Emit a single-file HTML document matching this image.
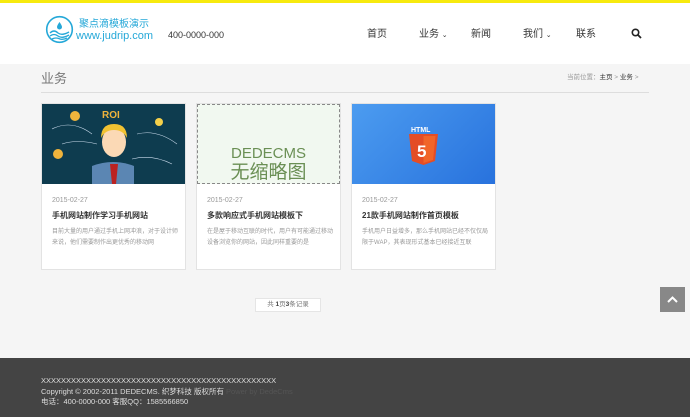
<!DOCTYPE html>
<html><head><meta charset="utf-8"><style>
*{margin:0;padding:0;box-sizing:border-box}
body{width:690px;height:417px;overflow:hidden;background:#f5f5f5;font-family:"Liberation Sans","Noto Sans CJK SC",sans-serif;position:relative}
.a{position:absolute;white-space:nowrap;line-height:1.2}
.top{position:absolute;left:0;top:0;width:690px;height:3px;background:#f7ea0f}
.hd{position:absolute;left:0;top:3px;width:690px;height:61px;background:#fff}
.nav{font-size:10px;color:#333;top:29px;line-height:12px}
.card{position:absolute;top:103px;width:145px;height:167px;background:#fff;border:1px solid #e3e3e3}
.card .img{height:80px}
.date{position:absolute;left:10px;top:92px;font-size:7px;color:#999;line-height:9px}
.tt{position:absolute;left:10px;top:107px;font-size:8px;font-weight:bold;color:#333;line-height:10px;white-space:nowrap}
.ds{position:absolute;left:10px;top:123px;font-size:6px;color:#999;line-height:11px;width:126px;white-space:normal;overflow:hidden;height:22px}
.ft{position:absolute;left:0;top:358px;width:690px;height:59px;background:#444}
.fl{position:absolute;left:41px;font-size:7.5px;color:#ddd;line-height:9px;white-space:nowrap}
</style></head><body>
<div class="top"></div>
<div class="hd"></div>
<svg class="a" style="left:45px;top:15px" width="29" height="29" viewBox="0 0 29 29"><circle cx="14.5" cy="14.5" r="12.8" fill="none" stroke="#25a8d8" stroke-width="1.6"/><path d="M14.5 7 q-2.5 3.5 -2.5 5 a2.5 2.5 0 0 0 5 0 q0-1.5 -2.5-5z" fill="#25a8d8"/><path d="M5 18 q4-4 8 0 q4 3 11-1 M5 21 q4-3 8 0 q4 3 11 -1 M7 24 q4-2 8 0 q3 1 7 -1" stroke="#25a8d8" fill="none" stroke-width="1.3"/></svg>
<div class="a" style="left:79px;top:19px;font-size:10px;line-height:11px;color:#25a8d8">聚点滴模板演示</div>
<div class="a" style="left:76px;top:30px;font-size:11px;line-height:12px;color:#25a8d8">www.judrip.com</div>
<div class="a" style="left:168px;top:30px;font-size:9px;line-height:11px;color:#333">400-0000-000</div>
<div class="a nav" style="left:367px">首页</div>
<div class="a nav" style="left:419px">业务 <span style="font-size:7px">⌄</span></div>
<div class="a nav" style="left:471px">新闻</div>
<div class="a nav" style="left:523px">我们 <span style="font-size:7px">⌄</span></div>
<div class="a nav" style="left:576px">联系</div>
<svg class="a" style="left:631px;top:28px" width="11" height="11" viewBox="0 0 11 11"><circle cx="4.5" cy="4.5" r="3.2" fill="none" stroke="#222" stroke-width="1.6"/><path d="M7 7l3 3" stroke="#222" stroke-width="1.8"/></svg>
<div class="a" style="left:41px;top:71px;font-size:13px;line-height:16px;color:#777">业务</div>
<div class="a" style="left:41px;top:92px;width:608px;height:1px;background:#ddd"></div>
<div class="a" style="left:567px;top:74px;font-size:6.5px;line-height:8px;color:#999">当前位置：<span style="color:#333">主页</span> &gt; <span style="color:#333">业务</span> &gt;</div>

<div class="card" style="left:41px"><div class="img" style="background:#0e3c4f;position:relative">
<svg width="143" height="80" viewBox="0 0 143 80"><text x="60" y="14" font-size="10" font-weight="bold" fill="#f0b43c" font-family="Liberation Sans">ROI</text><circle cx="33" cy="12" r="5" fill="#f0b43c"/><circle cx="16" cy="50" r="5" fill="#f0b43c"/><circle cx="117" cy="18" r="4" fill="#f5d04a"/><path d="M50 80 v-18 q21-8 42 0 v18z" fill="#5b86b3"/><path d="M68 60 h8 l-2 20 h-4z" fill="#b22"/><ellipse cx="72" cy="38" rx="12" ry="15" fill="#fbd9b5"/><path d="M59 34 q0-14 13-14 q13 0 13 14 q-4-8-13-8 q-9 0-13 8z" fill="#f1c232"/><path d="M10 25 q20-10 40 5 M95 30 q20-5 40 10 M20 40 q15 -5 35 0 M90 55 q20-5 40 5" stroke="#cde" stroke-width=".6" fill="none"/></svg></div>
<div class="date">2015-02-27</div><div class="tt">手机网站制作学习手机网站</div><div class="ds">目前大量的用户通过手机上网冲浪，对于设计师来说，他们需要制作出更优秀的移动网</div></div>

<div class="card" style="left:196px"><div class="img" style="background:#f1f8f0;border:1px dashed #888;text-align:center;color:#6a8f54;padding-top:40px;font-size:15px;line-height:17px">DEDECMS<br><span style="font-size:19px;line-height:22px">无缩略图</span></div>
<div class="date">2015-02-27</div><div class="tt">多款响应式手机网站模板下</div><div class="ds">在是屋于移动互联的时代，用户有可能通过移动设备浏览你的网站，因此同样重要的是</div></div>

<div class="card" style="left:351px"><div class="img" style="background:linear-gradient(135deg,#4c9cf0,#2872dd);position:relative">
<svg width="143" height="80" viewBox="0 0 143 80"><text x="59" y="28" font-size="7" font-weight="bold" fill="#fff" font-family="Liberation Sans">HTML</text><path d="M57 30 h29 l-3 27 l-11.5 4 l-11.5-4z" fill="#e44d26"/><path d="M71.5 32 h12 l-2.5 24 l-9.5 3z" fill="#f16529"/><text x="65" y="53" font-size="17" font-weight="bold" fill="#fff" font-family="Liberation Sans">5</text></svg></div>
<div class="date">2015-02-27</div><div class="tt">21款手机网站制作首页模板</div><div class="ds">手机用户日益增多，那么手机网站已经不仅仅局限于WAP，其表现形式基本已经接近互联</div></div>

<div class="a" style="left:255px;top:298px;width:66px;height:14px;background:#fff;border:1px solid #e5e5e5;font-size:6.5px;color:#777;text-align:center;line-height:12px">共 <b style="color:#444">1</b>页<b style="color:#444">3</b>条记录</div>
<div class="a" style="left:660px;top:287px;width:25px;height:25px;background:#888"><svg width="25" height="25"><path d="M8 15 l4.5-4.5 l4.5 4.5" stroke="#fff" stroke-width="2" fill="none"/></svg></div>

<div class="ft"></div>
<div class="fl" style="top:376px">XXXXXXXXXXXXXXXXXXXXXXXXXXXXXXXXXXXXXXXXXXXXXXX</div>
<div class="fl" style="top:387px">Copyright © 2002-2011 DEDECMS. 织梦科技 版权所有 <span style="color:#555">Power by DedeCms</span></div>
<div class="fl" style="top:397px">电话：400-0000-000 客服QQ：1585566850</div>
</body></html>
